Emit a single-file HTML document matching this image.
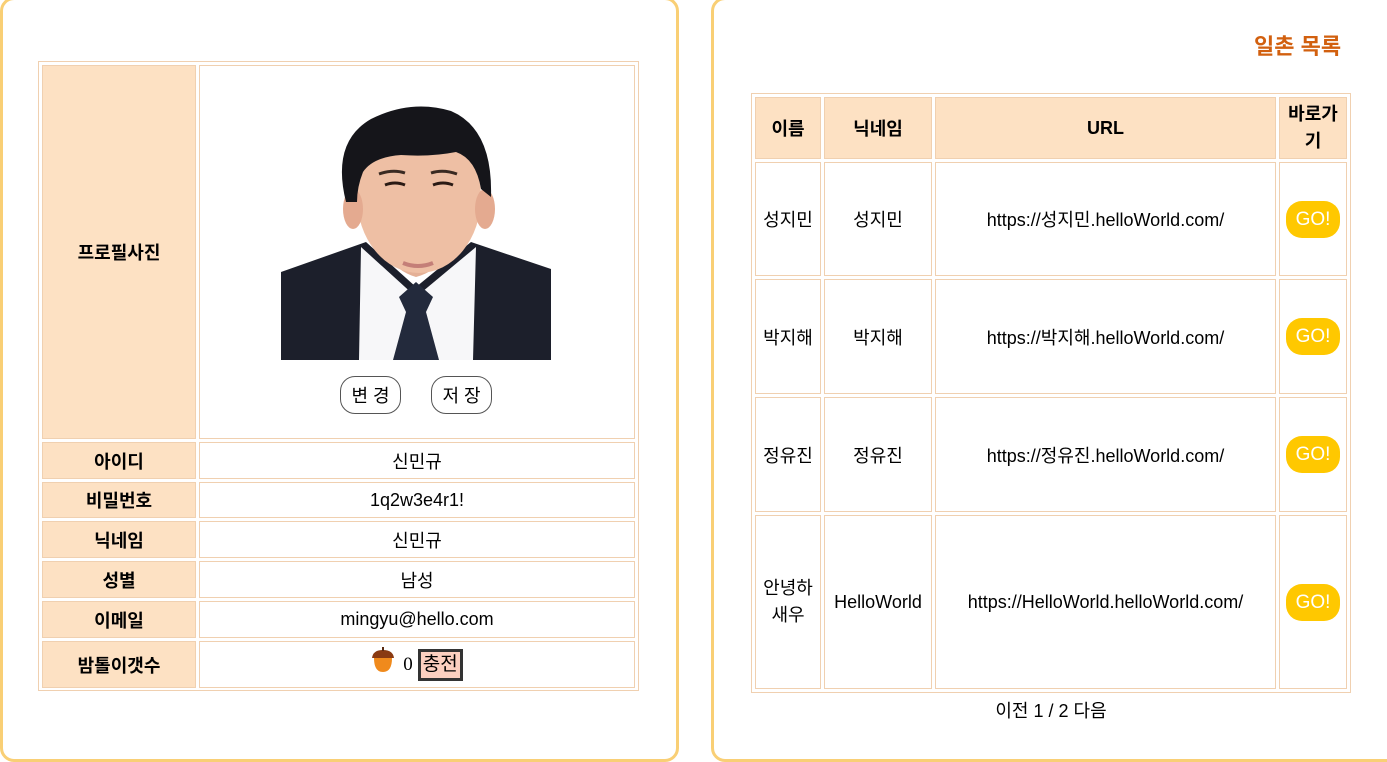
<!DOCTYPE html>
<html><head><meta charset="utf-8"><style>
*{box-sizing:border-box;margin:0;padding:0}
body{width:1387px;height:748px;overflow:hidden;background:#fff;font-family:"Liberation Sans","Noto Sans CJK KR","NanumGothic",sans-serif;color:#000;position:relative}
.panel{position:absolute;border:3px solid #f9cf75;border-radius:14px;background:#fff}
.c{position:absolute;border:1px solid #f0d0b0;display:flex;align-items:center;justify-content:center;text-align:center;font-size:18px}
.h{background:#fde1c3;font-weight:bold}
.go{background:#ffc800;color:#fff;border-radius:16px;width:54px;height:37px;line-height:37px;text-align:center;font-size:19px}
.btn{position:absolute;border:1px solid #555;border-radius:15px;width:61px;height:38px;display:flex;align-items:center;justify-content:center;font-size:18px;background:#fff}
</style></head><body>
<div class="panel" style="left:0;top:-3px;width:679px;height:765px"></div>
<div class="panel" style="left:711px;top:-3px;width:690px;height:765px"></div>

<div style="position:absolute;left:38px;top:61px;width:601px;height:630px;border:1px solid #f0d0b0"></div>
<div class="c h" style="left:42px;top:65px;width:154px;height:374px">프로필사진</div>
<div class="c" style="left:199px;top:65px;width:436px;height:374px"></div>
<svg style="position:absolute;left:281px;top:97px" width="270" height="263" viewBox="0 0 270 263">
<rect width="270" height="263" fill="#fff"/>
<path d="M0 175 L85 145 L135 190 L190 145 L270 172 L270 263 L0 263Z" fill="#1c1f2b"/>
<path d="M80 150 L135 200 L195 150 L192 263 L78 263Z" fill="#f7f7f9"/>
<path d="M118 200 L135 185 L152 200 L145 215 L158 263 L112 263 L125 215Z" fill="#232a3c"/>
<path d="M95 120 Q100 170 135 180 Q172 170 178 120 Z" fill="#e4b096"/>
<ellipse cx="138" cy="100" rx="62" ry="76" fill="#eebfa4"/>
<ellipse cx="72" cy="112" rx="10" ry="20" fill="#e4aa90"/>
<ellipse cx="204" cy="112" rx="10" ry="20" fill="#e4aa90"/>
<path d="M65 105 Q50 45 90 22 Q130 2 170 14 Q212 32 210 100 L200 92 Q195 62 175 55 Q150 60 120 58 Q92 60 82 75 Q76 90 76 105Z" fill="#15151a"/>
<path d="M98 77 Q112 72 124 76 M150 76 Q162 72 176 77" stroke="#3a2a22" stroke-width="3" fill="none"/>
<path d="M104 88 Q114 84 124 88 M152 88 Q162 84 172 88" stroke="#2a1a14" stroke-width="3" fill="none"/>
<path d="M122 166 Q137 172 152 166" stroke="#c47f78" stroke-width="4" fill="none"/>
</svg>
<div class="btn" style="left:340px;top:376px">변 경</div>
<div class="btn" style="left:431px;top:376px">저 장</div>

<div class="c h" style="left:42px;top:442px;width:154px;height:37px">아이디</div>
<div class="c" style="left:199px;top:442px;width:436px;height:37px">신민규</div>
<div class="c h" style="left:42px;top:482px;width:154px;height:36px">비밀번호</div>
<div class="c" style="left:199px;top:482px;width:436px;height:36px">1q2w3e4r1!</div>
<div class="c h" style="left:42px;top:521px;width:154px;height:37px">닉네임</div>
<div class="c" style="left:199px;top:521px;width:436px;height:37px">신민규</div>
<div class="c h" style="left:42px;top:561px;width:154px;height:37px">성별</div>
<div class="c" style="left:199px;top:561px;width:436px;height:37px">남성</div>
<div class="c h" style="left:42px;top:601px;width:154px;height:37px">이메일</div>
<div class="c" style="left:199px;top:601px;width:436px;height:37px">mingyu@hello.com</div>
<div class="c h" style="left:42px;top:641px;width:154px;height:47px">밤톨이갯수</div>
<div class="c" style="left:199px;top:641px;width:436px;height:47px">
<svg width="24" height="26" viewBox="0 0 24 26" style="margin-right:8px;margin-top:-10px"><path d="M3 11 Q3 25 12 25 Q21 25 21 11Z" fill="#f08a1c"/><path d="M1 11 Q2 3 12 3 Q22 3 23 11Z" fill="#8a3a12"/><rect x="11" y="0" width="2" height="4" fill="#5a2a10"/></svg>
<span style="font-family:'Liberation Serif',serif;font-size:19px">0</span>
<span style="margin-left:5px;border:3px solid #333;background:#fcd0c0;padding:0 2px;font-size:19px;line-height:26px">충전</span></div>

<div style="position:absolute;left:1254px;top:29px;font-size:22px;font-weight:bold;color:#d2600f">일촌 목록</div>
<div style="position:absolute;left:751px;top:93px;width:600px;height:600px;border:1px solid #f0d0b0"></div>
<div class="c h" style="left:755px;top:97px;width:66px;height:62px">이름</div>
<div class="c h" style="left:824px;top:97px;width:108px;height:62px">닉네임</div>
<div class="c h" style="left:935px;top:97px;width:341px;height:62px">URL</div>
<div class="c h" style="left:1279px;top:97px;width:68px;height:62px;line-height:27px">바로가<br>기</div>

<div class="c" style="left:755px;top:162px;width:66px;height:114px">성지민</div>
<div class="c" style="left:824px;top:162px;width:108px;height:114px">성지민</div>
<div class="c" style="left:935px;top:162px;width:341px;height:114px">https://성지민.helloWorld.com/</div>
<div class="c" style="left:1279px;top:162px;width:68px;height:114px"><div class="go">GO!</div></div>

<div class="c" style="left:755px;top:279px;width:66px;height:115px">박지해</div>
<div class="c" style="left:824px;top:279px;width:108px;height:115px">박지해</div>
<div class="c" style="left:935px;top:279px;width:341px;height:115px">https://박지해.helloWorld.com/</div>
<div class="c" style="left:1279px;top:279px;width:68px;height:115px"><div class="go">GO!</div></div>

<div class="c" style="left:755px;top:397px;width:66px;height:115px">정유진</div>
<div class="c" style="left:824px;top:397px;width:108px;height:115px">정유진</div>
<div class="c" style="left:935px;top:397px;width:341px;height:115px">https://정유진.helloWorld.com/</div>
<div class="c" style="left:1279px;top:397px;width:68px;height:115px"><div class="go">GO!</div></div>

<div class="c" style="left:755px;top:515px;width:66px;height:174px;line-height:27px">안녕하<br>새우</div>
<div class="c" style="left:824px;top:515px;width:108px;height:174px">HelloWorld</div>
<div class="c" style="left:935px;top:515px;width:341px;height:174px">https://HelloWorld.helloWorld.com/</div>
<div class="c" style="left:1279px;top:515px;width:68px;height:174px"><div class="go">GO!</div></div>

<div style="position:absolute;left:751px;top:697px;width:600px;text-align:center;font-size:18px">이전 1 / 2 다음</div>
</body></html>
